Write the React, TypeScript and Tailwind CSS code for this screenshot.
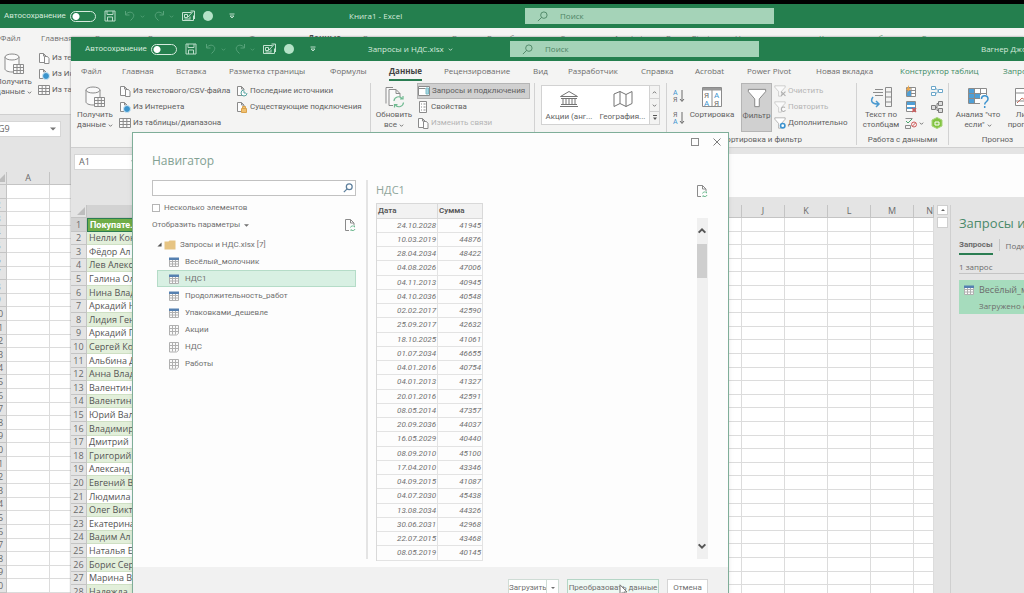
import React from 'react';
import type { ReactNode } from 'react';

const tabs = [
  'Файл', 'Главная', 'Вставка', 'Разметка страницы', 'Формулы', 'Данные', 'Рецензирование', 'Вид',
  'Разработчик', 'Справка', 'Acrobat', 'Power Pivot', 'Новая вкладка', 'Конструктор таблиц', 'Запрос',
];

const customers = [
  'Нелли Кон', 'Фёдор Ал', 'Лев Алекс', 'Галина Ол', 'Нина Влад', 'Аркадий Н', 'Лидия Ген', 'Аркадий Г',
  'Сергей Ко', 'Альбина Д', 'Анна Влад', 'Валентин', 'Валентин', 'Юрий Вал', 'Владимир', 'Дмитрий',
  'Григорий', 'Александ', 'Евгений В', 'Людмила', 'Олег Викт', 'Екатерина', 'Вадим Ал', 'Наталья Е',
  'Борис Сер', 'Марина В', 'Надежда',
];

const preview = [
  ['24.10.2028', '41945'], ['10.03.2019', '44876'], ['28.04.2034', '48422'], ['04.08.2026', '47006'],
  ['04.11.2013', '40945'], ['04.10.2036', '40548'], ['02.02.2017', '42590'], ['25.09.2017', '42632'],
  ['18.10.2025', '41061'], ['01.07.2034', '46655'], ['04.01.2016', '40754'], ['04.01.2013', '41327'],
  ['20.01.2016', '42591'], ['08.05.2014', '47357'], ['20.09.2036', '44037'], ['16.05.2029', '40440'],
  ['08.09.2010', '45100'], ['17.04.2010', '43346'], ['04.09.2015', '41087'], ['04.07.2030', '45438'],
  ['13.08.2034', '44326'], ['30.06.2031', '42968'], ['22.07.2015', '43468'], ['08.05.2019', '40145'],
];

const treeItems = [
  { name: 'Весёлый_молочник', table: true },
  { name: 'НДС1', table: true },
  { name: 'Продолжительность_работ', table: true },
  { name: 'Упаковками_дешевле', table: true },
  { name: 'Акции', table: false },
  { name: 'НДС', table: false },
  { name: 'Работы', table: false },
];

/* ---------- icons ---------- */

type IconProps = { className?: string };

const Caret = ({ className = 'w-[5px] h-[5px]' }: IconProps) => (
  <svg viewBox="0 0 6 6" className={`flex-none ${className}`} fill="none" stroke="currentColor">
    <path d="M1 2l2 2 2-2" />
  </svg>
);

const SaveIcon = () => (
  <svg viewBox="0 0 12 12" className="size-3 flex-none" fill="none" stroke="#b9dcc8">
    <path d="M1 1h10v10H1zM3 1v3.5h6V1M3.5 11V7h5v4" />
  </svg>
);

const UndoIcon = ({ className = '' }: IconProps) => (
  <svg viewBox="0 0 12 12" className={`size-3 flex-none ${className}`} fill="none" stroke="#57a37a">
    <path d="M1.500 1v4h4M1.500 5c2-3 5-3.500 7-2s1.500 4-.5 6L6.500 10.500" />
  </svg>
);

const FormIcon = () => (
  <svg viewBox="0 0 13 12" className="w-[13px] h-3 flex-none" fill="none" stroke="#c3e2d0">
    <path d="M.5 2.500h9M.5 2.500v8h11v-5M2.500 4.500h3v3h-3zM2.500 9h6M6 7l5-5.500M8.500 1h4v8M8 6.500v2" />
  </svg>
);

const SearchIcon = ({ className = '' }: IconProps) => (
  <svg viewBox="0 0 12 12" className={`flex-none ${className}`} fill="none" stroke="currentColor">
    <circle cx="7.500" cy="4.500" r="3.500" />
    <path d="M5 7L1 11" />
  </svg>
);

const DatabaseIcon = () => (
  <svg viewBox="0 0 22 22" className="size-[22px]" fill="#fafafa" stroke="#8b8b8b">
    <path d="M2 4v12c0 1.500 3 3 7 3s7-1.500 7-3V4" />
    <ellipse cx="9" cy="4" rx="7" ry="3" />
    <path d="M10.500 11.500h10v9h-10zM10.500 14.500h10M10.500 17.500h10M14 11.500v9M17.300 11.500v9" />
  </svg>
);

const RefreshDocIcon = () => (
  <svg viewBox="0 0 22 22" className="size-[22px]" fill="#fafafa" stroke="#8b8b8b">
    <path d="M3 17.500V1.500h7M6 3.500h7l4 4v12H6zM13 3.500v4h4" />
    <path d="M10 11h11v10H10z" fill="#f4f4f3" stroke="none" />
    <g fill="none" stroke="#6db98f" strokeWidth="1.200">
      <path d="M11 15a4.500 4.500 0 0 1 8-2.500M20 10v3h-3M20.500 16.500a4.500 4.500 0 0 1-8 2.500M11.500 21.500v-3h3" />
    </g>
  </svg>
);

const FileIcon = ({ badge }: { badge?: 'web' | 'recent' | 'link' }) => (
  <svg viewBox="0 0 12 12" className="size-3 flex-none" fill="#fdfdfd" stroke="#8b8b8b">
    <path d="M1.500 10.500v-9h4l2.500 2.500v6.500zM5.500 1.500V4h2.500" />
    {!badge && <path d="M6.500 4.500h3l1.500 2v5H6.500z" />}
    {badge === 'web' && <circle cx="8" cy="8" r="3.500" fill="#3b94cc" stroke="#cfe6f4" />}
    {badge === 'recent' && <path d="M8 5a3 3 0 1 0 3 3M8 6v2h2" stroke="#56a3a0" />}
    {badge === 'link' && <path d="M5.500 7.500h5v4h-5zM6.500 7V5.500h3V7" stroke="#d9a24c" fill="#f0c070" />}
  </svg>
);

const GridIcon = ({ className = 'size-3' }: IconProps) => (
  <svg viewBox="0 0 12 12" className={`flex-none ${className}`} fill="#fafafa" stroke="#8b8b8b">
    <path d="M.5 1.500h11v9H.5zM.5 4.500h11M.5 7.500h11M4.200 1.500v9M7.800 1.500v9" />
  </svg>
);

const PaneIcon = () => (
  <svg viewBox="0 0 12 12" className="size-3 flex-none" fill="#fff" stroke="#8b8b8b">
    <path d="M.5 1.500h11v9H.5zM.5 3.500h7" />
    <path d="M8 3h2.500v6H8z" fill="#a8d4e2" stroke="#7cbfc8" />
  </svg>
);

const ListIcon = () => (
  <svg viewBox="0 0 12 12" className="size-3 flex-none" fill="#fff" stroke="#8b8b8b">
    <path d="M2.500.5h7v11h-7zM4 3h1M4 6h1M4 9h1M6.500 3h2M6.500 6h2M6.500 9h2" />
  </svg>
);

const BankIcon = () => (
  <svg viewBox="0 0 20 18" className="h-[18px] w-5" fill="none" stroke="#747474">
    <path d="M1.500 6.500L10 1.500l8.500 5zM2 8.500h16M4 8.500v6M7 8.500v6M10 8.500v6M13 8.500v6M16 8.500v6M2 14.500h16M1 16.500h18" />
  </svg>
);

const MapIcon = () => (
  <svg viewBox="0 0 20 18" className="h-[18px] w-5" fill="none" stroke="#747474">
    <path d="M1 4l6-2.500 6 3 6-3v12l-6 3-6-3-6 3zM7 1.500v12M13 4.500v12" />
  </svg>
);

const SortArrowIcon = ({ flip = false }: { flip?: boolean }) => (
  <svg viewBox="0 0 12 14" className="h-3.5 w-3 flex-none">
    <text x="0" y="6" fontSize="7" fill={flip ? '#6b6b6b' : '#3c93cf'}>{flip ? 'Я' : 'А'}</text>
    <text x="0" y="13" fontSize="7" fill={flip ? '#3c93cf' : '#6b6b6b'}>{flip ? 'А' : 'Я'}</text>
    <path d="M9 1v11M7 10l2 2.500 2-2.500" fill="none" stroke="#6b6b6b" />
  </svg>
);

const SortIcon = () => (
  <svg viewBox="0 0 22 22" className="size-[22px]" fill="#fff" stroke="#8b8b8b">
    <path d="M1.500 1.500h19v19h-19zM11 1.500v19" />
    <path d="M2 2h18v2.500H2z" fill="#999" stroke="none" />
    <g stroke="none" fontSize="8">
      <text x="3" y="12" fill="#6b6b6b">Я</text>
      <text x="13" y="12" fill="#3c93cf">А</text>
      <text x="3" y="19.500" fill="#3c93cf">А</text>
      <text x="13" y="19.500" fill="#6b6b6b">Я</text>
    </g>
  </svg>
);

const FunnelIcon = ({ className = '', children }: IconProps & { children?: ReactNode }) => (
  <svg viewBox="0 0 22 22" className={`flex-none ${className}`} fill="#fff" stroke="#808080">
    <path d="M1.500 1.500h19v2.500l-7 8v8.500h-5V12l-7-8z" />
    {children}
  </svg>
);

const TextColumnsIcon = () => (
  <svg viewBox="0 0 22 22" className="size-[22px]" fill="none" stroke="#8b8b8b">
    <path d="M15.500 1.500h6v19h-6zM15.500 6h6M15.500 11h6M15.500 16h6M5 3.500h8M3 6.500h10M5 9.500h8" />
    <path d="M3 11c-3 4-1 7 5 7M6 15l3 3-3 3" stroke="#4b9ad0" strokeWidth="1.500" />
  </svg>
);

const WhatIfIcon = () => (
  <svg viewBox="0 0 22 22" className="size-[22px]" fill="#fff" stroke="#8b8b8b">
    <path d="M1.500 2.500h18v15h-18zM1.500 7.500h18M1.500 12.500h18M7.500 2.500v15M13.500 2.500v15" />
    <path d="M2 3h5v4H2zM2 8h5v4H2zM8 8h5v4H8zM2 13h5v4H2z" fill="#4f9fd6" stroke="none" />
    <path d="M13 9h9v13h-9z" fill="#f4f4f3" stroke="none" />
    <path d="M14.500 13c0-4.500 6.500-4.500 6.500 0 0 3-3.300 2.500-3.300 5.500M17.700 20v2" fill="none" stroke="#3c93cf" strokeWidth="1.500" />
  </svg>
);

const ForecastIcon = () => (
  <svg viewBox="0 0 22 22" className="size-[22px]" fill="#fff" stroke="#8b8b8b">
    <path d="M1.500 2.500h18v17h-18zM1.500 7h18M1.500 15h18" />
    <path d="M3 17l5-5 3 2 7-8" fill="none" stroke="#c96a5a" />
  </svg>
);

const dataToolIcons = [
  <svg key="flash" viewBox="0 0 12 12" className="size-3" fill="#fff" stroke="#8b8b8b"><path d="M1.500 2.500h9v9h-9zM1.500 5.500h9M1.500 8.500h9M6 2.500v9" /><path d="M2 6h4v5H2z" fill="#4f9fd6" stroke="none" /><path d="M4 0L1 5h2L2 8l4-5H4z" fill="#eaa64b" stroke="none" /></svg>,
  <svg key="consolidate" viewBox="0 0 12 12" className="size-3" fill="#fff" stroke="#6ba6c9"><path d="M.5 1.500h4v3h-4zM.5 7.500h4v3h-4zM7.500 4.500h4v3h-4zM4.500 3l3 3M4.500 9l3-3" /></svg>,
  <svg key="duplicates" viewBox="0 0 12 12" className="size-3" fill="#fff" stroke="#8b8b8b"><path d="M1.500.5h9v10h-9z" /><path d="M2 1h8v3H2zM2 6h8v2H2z" fill="#4f9fd6" stroke="none" /><path d="M7 7l4 4M11 7l-4 4" stroke="#d05a5a" strokeWidth="1.500" /></svg>,
  <svg key="relations" viewBox="0 0 12 12" className="size-3" fill="#ddd" stroke="#7c7c7c"><path d="M.5 4.500h4v4h-4zM7.500.5h4v4h-4zM7.500 7.500h4v4h-4zM4.500 6.500H6v-4h1.500M6 6.500v3h1.500" /></svg>,
  <svg key="validation" viewBox="0 0 12 12" className="size-3" fill="none" stroke="#8b8b8b"><path d="M.5 1.500h7M.5 8.500h5v3h-5z" /><path d="M1 4l2 2 4-4" stroke="#4aa56e" /><circle cx="9" cy="7.500" r="2.500" stroke="#d05a5a" /><path d="M7.500 9l3-3" stroke="#d05a5a" /></svg>,
  <svg key="model" viewBox="0 0 12 12" className="size-3" fill="#82c341" stroke="#a9d67c"><path d="M1 3l5-2.500L11 3v6l-5 2.500L1 9z" /><path d="M4 5h4v3H4z" stroke="#fff" /></svg>,
];

const RefreshPageIcon = () => (
  <svg viewBox="0 0 12 14" className="h-3.5 w-3 flex-none" fill="none" stroke="#8b8b8b">
    <path d="M5 12.500H1.500v-11h5L10 5v2M6.500 1.500V5H10" />
    <path d="M6.500 9.500a2.200 2.200 0 0 1 4-.5V7.500M11 11a2.200 2.200 0 0 1-4 .5V13" stroke="#6db98f" />
  </svg>
);

const TreeTableIcon = ({ blue }: { blue: boolean }) => (
  <svg viewBox="0 0 12 12" className="size-3 flex-none" fill="#fafafa" stroke="#b0b0b0">
    <path d={blue ? 'M1.500 2.500h9v8h-9zM1.500 5.500h9M1.500 8h9M4.500 4v6.500M7.500 4v6.500' : 'M1.500 1.500h9v8l-2 1.500h-7zM1.500 4.500h9M1.500 7.500h9M4.500 1.500v9M7.500 1.500v9'} />
    {blue && <path d="M1 1.500h10v2.500H1z" fill="#5580b0" stroke="none" />}
  </svg>
);

/* ---------- ribbon ---------- */

const BigButton = ({ icon, lines, menu = false, className = '' }: { icon: ReactNode; lines: string[]; menu?: boolean; className?: string }) => (
  <button type="button" className={`flex h-[49px] flex-none flex-col items-center pt-[3px] leading-[10px] ${className}`}>
    <span className="mb-0.5 flex h-[22px] items-center">{icon}</span>
    {lines.map((line, i) => (
      <span key={line} className="flex items-center gap-0.5">
        {line}
        {menu && i === lines.length - 1 && <Caret />}
      </span>
    ))}
  </button>
);

const SmallButton = ({ icon, children, className = '' }: { icon: ReactNode; children: string; className?: string }) => (
  <button type="button" className={`flex h-4 items-center gap-0.5 ${className}`}>
    {icon}
    {children}
  </button>
);

const Group = ({ label, className = '', children }: { label?: string; className?: string; children: ReactNode }) => (
  <div className={`flex flex-none flex-col border-r border-[#d2d2d2] ${className}`}>
    <div className="flex h-[50px]">{children}</div>
    <div className="pt-0.5 text-center leading-3">{label}</div>
  </div>
);

const Ribbon = () => (
  <div className="flex h-[67px] overflow-hidden border-b border-[#cfcfcf] py-0.5 font-['Roboto','Open_Sans',sans-serif] text-[8px] text-[#5f5f5f]">
    <Group className="w-[300px]">
      <BigButton className="w-12" icon={<DatabaseIcon />} lines={['Получить', 'данные']} menu />
      <div className="w-[117px]">
        <SmallButton icon={<FileIcon />}>Из текстового/CSV-файла</SmallButton>
        <SmallButton icon={<FileIcon badge="web" />}>Из Интернета</SmallButton>
        <SmallButton icon={<GridIcon />}>Из таблицы/диапазона</SmallButton>
      </div>
      <div>
        <SmallButton icon={<FileIcon badge="recent" />}>Последние источники</SmallButton>
        <SmallButton icon={<FileIcon badge="link" />}>Существующие подключения</SmallButton>
      </div>
    </Group>
    <Group className="w-[164px]">
      <BigButton className="w-[46px]" icon={<RefreshDocIcon />} lines={['Обновить', 'все']} menu />
      <div>
        <SmallButton className="w-[113px] border border-[#b5b5b5] bg-[#d0d0d0]" icon={<PaneIcon />}>Запросы и подключения</SmallButton>
        <SmallButton icon={<ListIcon />}>Свойства</SmallButton>
        <SmallButton className="text-[#b5b5b5]" icon={<FileIcon />}>Изменить связи</SmallButton>
      </div>
    </Group>
    <Group className="w-[132px] pl-1.5">
      <div className="mt-0.5 flex h-10 border border-[#d2d2d2] bg-white">
        <button type="button" className="flex w-[54px] flex-col items-center gap-1 pt-1 leading-[10px]"><BankIcon />Акции (анг...</button>
        <button type="button" className="flex w-[53px] flex-col items-center gap-1 pt-1 leading-[10px]"><MapIcon />География...</button>
        <div className="flex w-2.5 flex-col divide-y divide-[#d2d2d2] border-l border-[#d2d2d2] bg-[#f3f3f2]">
          <button type="button" aria-label="Вверх" className="flex flex-1 items-center justify-center"><Caret className="size-[5px] rotate-180" /></button>
          <button type="button" aria-label="Вниз" className="flex flex-1 items-center justify-center"><Caret /></button>
          <button type="button" aria-label="Ещё" className="flex flex-1 items-center justify-center">
            <svg viewBox="0 0 6 6" className="size-1.5" fill="#555"><path d="M1 0h4v1H1zM1 2.500h4l-2 2.500z" /></svg>
          </button>
        </div>
      </div>
    </Group>
    <Group className="w-[190px]" label="Сортировка и фильтр">
      <div className="flex w-[18px] flex-col gap-2 pl-1.5 pt-1.5">
        <button type="button" aria-label="По возрастанию"><SortArrowIcon /></button>
        <button type="button" aria-label="По убыванию"><SortArrowIcon flip /></button>
      </div>
      <BigButton className="w-[54px]" icon={<SortIcon />} lines={['Сортировка']} />
      <BigButton className="ml-0.5 w-[31px] border border-[#b5b5b5] bg-[#d0d0d0]" icon={<FunnelIcon className="size-5" />} lines={['Фильтр']} />
      <div className="pl-0.5">
        <SmallButton className="text-[#b5b5b5]" icon={<FunnelIcon className="size-3 opacity-60"><path d="M13 12l8 8M21 12l-8 8" strokeWidth="2" /></FunnelIcon>}>Очистить</SmallButton>
        <SmallButton className="text-[#b5b5b5]" icon={<FunnelIcon className="size-3 opacity-60"><path d="M20 12a4 4 0 1 0 1 5" strokeWidth="2" /></FunnelIcon>}>Повторить</SmallButton>
        <SmallButton icon={<FunnelIcon className="size-3"><circle cx="16" cy="16" r="4" stroke="#3c93cf" strokeWidth="3" /></FunnelIcon>}>Дополнительно</SmallButton>
      </div>
    </Group>
    <Group className="w-[92px]" label="Работа с данными">
      <BigButton className="w-12" icon={<TextColumnsIcon />} lines={['Текст по', 'столбцам']} />
      <div className="grid grid-cols-[26px_12px] content-start">
        {dataToolIcons.map((icon, i) => (
          <button key={i} type="button" aria-label="Инструмент" className="flex h-4 items-center gap-0.5">
            {icon}
            {i === 4 && <Caret />}
          </button>
        ))}
      </div>
    </Group>
    <Group className="w-[98px]" label="Прогноз">
      <BigButton className="w-[58px]" icon={<WhatIfIcon />} lines={['Анализ "что', 'если"']} menu />
      <BigButton className="w-9" icon={<ForecastIcon />} lines={['Лист', 'прогноза']} />
    </Group>
  </div>
);

/* ---------- excel window ---------- */

type WindowProps = { title: string; menu?: boolean; columns: string; user?: string; cell: string; children: ReactNode };

const ExcelWindow = ({ title, menu = false, columns, user, cell, children }: WindowProps) => (
  <div className="flex h-full flex-col overflow-hidden whitespace-nowrap bg-[#e4e4e4]">
    <header className={`grid h-6 flex-none items-center bg-[#247f4e] text-[8px] text-[#d5eadd] ${columns}`}>
      <div className="flex items-center pl-3.5">
        <label className="flex w-[92px] items-center justify-between font-['Roboto','Open_Sans',sans-serif]">
          Автосохранение
          <input type="checkbox" className="h-[11px] w-[26px] flex-none appearance-none rounded-full border border-[#d5eadd] bg-[radial-gradient(circle_at_5px_50%,#fff_3px,transparent_4px)]" />
        </label>
        <div className="ml-2 flex items-center gap-2 text-[#57a37a]">
          <SaveIcon />
          <span className="flex items-center gap-1"><UndoIcon /><Caret /></span>
          <span className="flex items-center gap-1"><UndoIcon className="-scale-x-100" /><Caret /></span>
          <FormIcon />
          <span className="size-2.5 rounded-full bg-[#b5e3c8]" />
          <svg viewBox="0 0 6 6" className="ml-2 size-1.5" fill="none" stroke="#b9dcc8"><path d="M.5 1h5M1 3h4l-2 2z" /></svg>
        </div>
      </div>
      <div className="flex items-center gap-1">{title}{menu && <Caret />}</div>
      <label className="flex h-4 items-center gap-3 bg-[#a5d3b8] pl-3 text-[#4d8465]">
        <SearchIcon className="size-[11px]" />
        <input type="search" placeholder="Поиск" className="w-40 bg-transparent outline-none placeholder:text-[#4d8465]" />
      </label>
      <div className="col-start-5 overflow-hidden">{user}</div>
    </header>
    <div className="flex-none bg-[#f4f4f3]">
      <nav className="grid h-5 grid-cols-[41px_54px_53px_101px_59px_55px_89px_35px_73px_54px_52px_69px_84px_103px_50px] pl-2.5 text-[8px] text-[#6c6c6c]">
        {tabs.map((tab, i) => (
          <a key={tab} href="#" className={`h-5 justify-self-start leading-5 ${i === 5 ? 'border-b-2 border-[#2b7d52] font-bold text-[#444]' : ''} ${i > 12 ? 'text-[#3d8a64]' : ''}`}>
            {tab}
          </a>
        ))}
      </nav>
      <Ribbon />
    </div>
    <div className="mt-1.5 flex h-[43px] flex-none">
      <div className="w-[71px] flex-none pl-[3px]">
        <div className="flex h-4 items-center justify-between border border-[#d6d6d6] bg-white px-1 text-[9px] text-[#666]">
          {cell}
          <svg viewBox="0 0 6 6" className="size-1.5" fill="#777"><path d="M0 1.500h6l-3 3z" /></svg>
        </div>
      </div>
      <div className="ml-3 flex-1 bg-[#fdfdfd]" />
    </div>
    <div className="flex flex-1 pt-2">{children}</div>
  </div>
);

const Corner = () => (
  <th className="h-[13px] border-b border-r border-[#c4c4c4]">
    <svg viewBox="0 0 10 10" className="ml-auto size-2.5"><path d="M9 1v8H1z" fill="#bdbdbd" /></svg>
  </th>
);

const rowHeight = (i: number) => (i % 5 % 2 ? 'h-[13px]' : 'h-3.5');
const head = 'border-b border-r border-[#c4c4c4] font-normal';
const line = 'border-b border-r border-[#dcdcdc]';

const BackSheet = () => (
  <table className="w-full table-fixed self-start border-separate border-spacing-0 text-[9px] leading-3 text-[#6a6a6a]">
    <colgroup><col className="w-[17px]" /><col className="w-[43px]" /><col /></colgroup>
    <thead>
      <tr><Corner /><th className={head}>A</th><th className={head} /></tr>
    </thead>
    <tbody>
      {Array.from({ length: 31 }, (_, i) => (
        <tr key={i} className={rowHeight(i)}>
          <th className={head}>{i + 1}</th>
          <td className={`bg-white ${line}`} />
          <td className={`bg-white ${line}`} />
        </tr>
      ))}
    </tbody>
  </table>
);

const CustomerSheet = () => (
  <table className="w-full table-fixed self-start border-separate border-spacing-0 text-[9px] leading-3 text-[#6a6a6a]">
    <colgroup>
      <col className="w-4" /><col />
      <col className="w-[43px]" /><col className="w-[43px]" /><col className="w-[43px]" /><col className="w-[43px]" /><col className="w-[43px]" />
      <col className="w-5" />
    </colgroup>
    <thead>
      <tr>
        <Corner />
        <th className={`bg-[#d2d2d2] ${head}`}>A</th>
        {['I', 'J', 'K', 'L', 'M'].map((c) => <th key={c} className={head}>{c}</th>)}
        <th className={`text-right ${head}`}>N</th>
      </tr>
    </thead>
    <tbody>
      {['Покупате.', ...customers].map((name, i) => (
        <tr key={i} className={rowHeight(i)}>
          <th className={`${head} ${i === 0 ? 'bg-[#d2d2d2]' : ''}`}>{i + 1}</th>
          <td className={`overflow-hidden pl-0.5 ${i === 0 ? "border border-[#2b7d52] bg-[#70ad47] font-['Roboto','Open_Sans',sans-serif] font-bold text-white" : i % 2 ? 'border-b border-[#cfe0c4] bg-[#e2efda] text-[#555]' : 'border-b border-[#cfe0c4] bg-white text-[#555]'}`}>
            {name}
          </td>
          {[0, 1, 2, 3, 4, 5].map((c) => <td key={c} className={`bg-white ${line}`} />)}
        </tr>
      ))}
    </tbody>
  </table>
);

const QueriesPanel = () => (
  <aside className="w-[74px] flex-none overflow-hidden border-l border-[#cfcfcf] pl-2 pt-1.5 text-[8px] text-[#6c6c6c]">
    <h2 className="text-[13px] leading-6 text-[#4b8a6b]">Запросы и подключения</h2>
    <div className="flex h-5 items-center gap-1.5">
      <button type="button" className="h-5 flex-none border-b-2 border-[#2b7d52] pt-0.5 font-['Roboto','Open_Sans',sans-serif] font-bold">Запросы</button>
      <span className="h-3 w-px flex-none bg-[#c4c4c4]" />
      <button type="button" className="pt-0.5">Подключения</button>
    </div>
    <div className="mt-1.5 border-b border-[#c4c4c4] leading-3">1 запрос</div>
    <div className="mt-1.5 flex h-[34px] gap-1 bg-[#a6dcbd] pl-1 pt-1">
      <TreeTableIcon blue />
      <div>
        <div className="text-[9px] leading-3">Весёлый_молочник</div>
        <div className="pt-1 leading-3">Загружено строк</div>
      </div>
    </div>
  </aside>
);

/* ---------- navigator dialog ---------- */

const Navigator = () => (
  <div role="dialog" aria-label="Навигатор" className="whitespace-nowrap border border-[#7fae99] bg-[#fdfdfd] font-['Roboto','Open_Sans',sans-serif] text-[8px] text-[#707070] shadow-md">
    <div className="flex h-[18px] items-center justify-end gap-3.5 pr-[7px]">
      <button type="button" aria-label="Развернуть" className="size-2 border border-[#8a8a8a]" />
      <button type="button" aria-label="Закрыть">
        <svg viewBox="0 0 8 8" className="size-2" stroke="#7d7d7d"><path d="M.5.5l7 7M7.500.5l-7 7" /></svg>
      </button>
    </div>
    <h1 className="pl-[19px] font-['Open_Sans',sans-serif] text-[12px] leading-5 text-[#83a193]">Навигатор</h1>
    <div className="mt-[9px] flex h-[379px] pl-[19px] pr-5">
      <div className="w-[204px] flex-none">
        <label className="flex h-4 items-center border border-[#c2c2c2] bg-white pr-0.5 text-[#5d7f9c]">
          <input type="text" aria-label="Поиск" className="min-w-0 flex-1 bg-transparent px-1 outline-none" />
          <SearchIcon className="size-2.5 stroke-[1.5]" />
        </label>
        <label className="mt-1.5 flex h-3 items-center gap-1">
          <input type="checkbox" className="size-2 appearance-none border border-[#b5b5b5] bg-white" />
          Несколько элементов
        </label>
        <div className="mt-1 flex h-3.5 items-center justify-between">
          <button type="button" className="flex items-center gap-1">
            Отобразить параметры
            <svg viewBox="0 0 6 6" className="size-[5px]" fill="currentColor"><path d="M0 1.500h6l-3 3z" /></svg>
          </button>
          <button type="button" aria-label="Обновить"><RefreshPageIcon /></button>
        </div>
        <ul className="mt-1 pl-[5px]">
          <li className="flex h-[17px] items-center">
            <svg viewBox="0 0 6 6" className="size-[5px]" fill="#555"><path d="M5.500.5v5h-5z" /></svg>
            <svg viewBox="0 0 12 10" className="ml-0.5 h-2.5 w-3" fill="#e6c483"><path d="M.5 1.500h4l1-1h6v9H.5z" /></svg>
            <span className="pl-1">Запросы и НДС.xlsx [7]</span>
          </li>
          {treeItems.map((item, i) => (
            <li key={item.name} className={`flex h-[17px] items-center gap-[5px] border pl-2.5 ${i === 1 ? 'border-[#b5dcc8] bg-[#d8f0e3]' : 'border-transparent'}`}>
              <TreeTableIcon blue={item.table} />
              {item.name}
            </li>
          ))}
        </ul>
      </div>
      <div className="ml-2.5 flex min-w-0 flex-1 border-l-2 border-[#e4e4e4] pl-2">
        <div className="flex-1">
          <h2 className="h-[23px] font-['Open_Sans',sans-serif] text-[11px] leading-5 text-[#8fa59b]">НДС1</h2>
          <table className="w-[107px] table-fixed border-separate border-spacing-0 border-l border-t border-[#d9d9d9] leading-3">
            <thead>
              <tr className="h-[15px] bg-[#f2f2f2] text-left text-[#555]">
                <th className="w-[61px] border-b border-r border-[#d9d9d9] px-px font-semibold">Дата</th>
                <th className="border-b border-r border-[#d9d9d9] px-px font-semibold">Сумма</th>
              </tr>
            </thead>
            <tbody>
              {preview.map(([date, sum], i) => (
                <tr key={i} className={`text-right italic ${i % 4 === 3 ? 'h-[15px]' : 'h-3.5'}`}>
                  <td className="border-b border-r border-[#e3e3e3] px-px">{date}</td>
                  <td className="border-b border-r border-[#e3e3e3] px-px">{sum}</td>
                </tr>
              ))}
            </tbody>
          </table>
        </div>
        <div className="flex flex-col items-center">
          <button type="button" aria-label="Обновить" className="mb-5 mt-1"><RefreshPageIcon /></button>
          <div className="flex w-[11px] flex-1 flex-col items-center bg-[#f0f0f0] text-[#555]">
            <Caret className="my-2 size-2.5 rotate-180 stroke-[1.2]" />
            <div className="h-[34px] w-2.5 bg-[#cecece]" />
            <Caret className="mb-2 mt-auto size-2.5 stroke-[1.2]" />
          </div>
        </div>
      </div>
    </div>
    <footer className="mt-2 flex justify-end gap-2 bg-[#f1f1f1] py-3 pr-5">
      <div className="flex h-[17px] border border-[#cfdcd5] bg-white">
        <button type="button" className="w-[37px]">Загрузить</button>
        <button type="button" aria-label="Параметры загрузки" className="flex w-3 items-center justify-center border-l border-[#cfdcd5]">
          <svg viewBox="0 0 6 6" className="size-1" fill="currentColor"><path d="M0 1.500h6l-3 3z" /></svg>
        </button>
      </div>
      <button type="button" className="relative h-[17px] w-[92px] border border-[#b5d6c6] bg-[#eef8f3]">
        Преобразовать данные
        <svg viewBox="0 0 9 13" className="absolute left-[51px] top-1 h-[13px] w-[9px]" fill="#fff" stroke="#777">
          <path d="M1 .8v9.700l2.300-2 1.500 3.500 1.500-.6-1.500-3.400H8z" />
        </svg>
      </button>
      <button type="button" className="h-[17px] w-[41px] border border-[#d5d5d5] bg-white">Отмена</button>
    </footer>
  </div>
);

const App = () => (
  <main className="relative h-screen overflow-hidden bg-black font-['Open_Sans','Noto_Sans',sans-serif]">
    {/* Empty workbook behind */}
    <div className="absolute -left-2.5 bottom-0 right-0 top-1">
      <ExcelWindow title="Книга1  -  Excel" columns="grid-cols-[359px_176px_249px_1fr_43px]" cell="G9">
        <BackSheet />
      </ExcelWindow>
    </div>

    {/* Active workbook */}
    <div className="absolute bottom-0 left-[71px] right-0 top-[37px] shadow-[0_0_2px_#888]">
      <ExcelWindow title="Запросы и НДС.xlsx" menu columns="grid-cols-[297px_142px_249px_1fr_43px]" user="Вагнер Джо" cell="A1">
        <div className="min-w-0 flex-1">
          <CustomerSheet />
        </div>
        <div className="flex w-4 flex-none flex-col gap-0.5 pl-[3px] pr-0.5">
          <button type="button" aria-label="Прокрутить вверх" className="flex h-2.5 items-center justify-center border border-[#cfcfcf] bg-white">
            <svg viewBox="0 0 6 6" className="size-1" fill="#666"><path d="M0 4.500h6l-3-3z" /></svg>
          </button>
          <div className="h-[11px] border border-[#cfcfcf] bg-white" />
        </div>
        <QueriesPanel />
      </ExcelWindow>
    </div>

    {/* Power Query navigator */}
    <div className="absolute left-[132px] top-[132px] w-[597px]">
      <Navigator />
    </div>
  </main>
);

export default App;
